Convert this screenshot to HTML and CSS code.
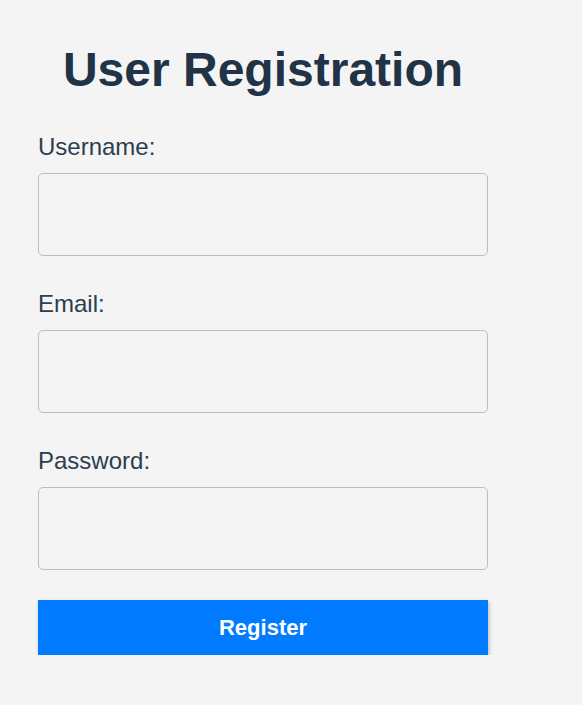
FILE: index.html
```html
<!DOCTYPE html>
<html lang="en">
<head>
<meta charset="utf-8">
<title>User Registration</title>
<link rel="stylesheet" href="styles.css">
</head>
<body>
<div class="container">
  <h1 class="title">User Registration</h1>
  <form class="form">
    <label class="label" for="username">Username:</label>
    <input class="input" type="text" id="username">
    <label class="label" for="email">Email:</label>
    <input class="input" type="email" id="email">
    <label class="label" for="password">Password:</label>
    <input class="input" type="password" id="password">
    <button class="button" type="button">Register</button>
  </form>
</div>
</body>
</html>
```

FILE: styles.css
```css
html, body {
  margin: 0;
  padding: 0;
  background: #f4f4f4;
}
body {
  font-family: "Liberation Sans", Arial, sans-serif;
}
.container {
  width: 450px;
  margin-left: 38px;
  padding-top: 42px;
}
.title {
  margin: 0;
  font-size: 48px;
  line-height: 56px;
  font-weight: bold;
  color: #213346;
  text-align: center;
}
.form {
  display: flex;
  flex-direction: column;
  margin-top: 35px;
}
.label {
  display: block;
  font-size: 24px;
  line-height: 28px;
  color: #2c3e50;
  margin-bottom: 12px;
}
.input {
  box-sizing: border-box;
  width: 450px;
  height: 83px;
  margin: 0 0 34px 0;
  border: 1px solid #bdbdbd;
  border-radius: 5px;
  background: #f4f4f4;
}
.input:last-of-type {
  margin-bottom: 30px;
}
.button {
  width: 450px;
  height: 55px;
  border: none;
  border-radius: 0;
  background: #007bff;
  color: #ffffff;
  font-family: "Liberation Sans", Arial, sans-serif;
  font-size: 22px;
  font-weight: bold;
  box-shadow: 1px 2px 4px rgba(0, 0, 0, 0.25);
}
```
